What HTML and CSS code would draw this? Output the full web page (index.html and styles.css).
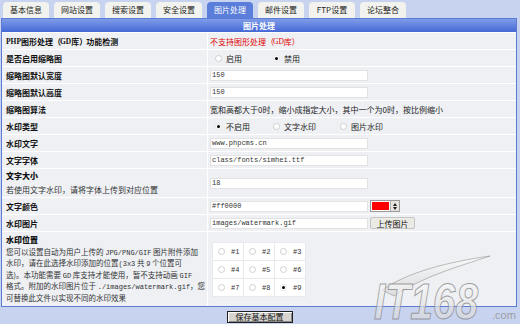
FILE: index.html
```html
<!DOCTYPE html>
<html lang="zh-CN">
<head>
<meta charset="utf-8">
<title>图片处理</title>
<link rel="stylesheet" href="styles.css">
</head>
<body>
<div class="tabs">
  <div class="tab">基本信息</div>
  <div class="tab">网站设置</div>
  <div class="tab">搜索设置</div>
  <div class="tab">安全设置</div>
  <div class="tab active">图片处理</div>
  <div class="tab">邮件设置</div>
  <div class="tab">FTP设置</div>
  <div class="tab">论坛整合</div>
</div>
<div class="panel">
  <div class="head">图片处理</div>
  <div class="row">
    <div class="lbl"><span class="lat">PHP</span>图形处理<span class="par">（</span><span class="lat">GD</span>库<span class="par">）</span>功能检测</div>
    <div class="val red">不支持图形处理<span class="par">（</span><span class="lat">GD</span>库<span class="par">）</span></div>
  </div>
  <div class="row">
    <div class="lbl">是否启用缩略图</div>
    <div class="val opts">
      <span class="opt"><span class="rd"></span>启用</span>
      <span class="opt"><span class="rd on"></span>禁用</span>
    </div>
  </div>
  <div class="row">
    <div class="lbl">缩略图默认宽度</div>
    <div class="val"><span class="inp">150</span></div>
  </div>
  <div class="row">
    <div class="lbl">缩略图默认高度</div>
    <div class="val"><span class="inp">150</span></div>
  </div>
  <div class="row">
    <div class="lbl">缩略图算法</div>
    <div class="val">宽和高都大于0时，缩小成指定大小，其中一个为0时，按比例缩小</div>
  </div>
  <div class="row">
    <div class="lbl">水印类型</div>
    <div class="val opts">
      <span class="opt"><span class="rd on"></span>不启用</span>
      <span class="opt wide"><span class="rd"></span>文字水印</span>
      <span class="opt"><span class="rd"></span>图片水印</span>
    </div>
  </div>
  <div class="row">
    <div class="lbl">水印文字</div>
    <div class="val"><span class="inp">www.phpcms.cn</span></div>
  </div>
  <div class="row">
    <div class="lbl">文字字体</div>
    <div class="val"><span class="inp">class/fonts/simhei.ttf</span></div>
  </div>
  <div class="row tall">
    <div class="lbl stack"><b>文字大小</b><span class="note">若使用文字水印，请将字体上传到对应位置</span></div>
    <div class="val"><span class="inp">18</span></div>
  </div>
  <div class="row">
    <div class="lbl">文字颜色</div>
    <div class="val">
      <span class="inp">#ff0000</span>
      <span class="colorsel"><span class="swatch"></span><span class="spin"><i class="up"></i><i class="dn"></i></span></span>
    </div>
  </div>
  <div class="row">
    <div class="lbl">水印图片</div>
    <div class="val">
      <span class="inp">images/watermark.gif</span>
      <span class="btn">上传图片</span>
    </div>
  </div>
  <div class="row pos">
    <div class="lbl stack top">
      <b class="ln">水印位置</b>
      <span class="note ln">您可以设置自动为用户上传的 <span class="m">JPG/PNG/GIF</span> 图片附件添加</span>
      <span class="note ln">水印，请在此选择水印添加的位置<span class="m">(3x3</span> 共 <span class="m">9</span> 个位置可</span>
      <span class="note ln">选)。本功能需要 <span class="m">GD</span> 库支持才能使用，暂不支持动画 <span class="m">GIF</span></span>
      <span class="note ln">格式。附加的水印图片位于 <span class="m">./images/watermark.gif</span>，您</span>
      <span class="note ln">可替换此文件以实现不同的水印效果</span>
    </div>
    <div class="val grid-cell">
      <table class="grid">
        <tr><td><span class="rd"></span>#1</td><td><span class="rd"></span>#2</td><td><span class="rd"></span>#3</td></tr>
        <tr><td><span class="rd"></span>#4</td><td><span class="rd"></span>#5</td><td><span class="rd"></span>#6</td></tr>
        <tr><td><span class="rd"></span>#7</td><td><span class="rd"></span>#8</td><td><span class="rd on"></span>#9</td></tr>
      </table>
    </div>
  </div>
</div>
<div class="actions"><button class="save">保存基本配置</button></div>
<svg class="wm" width="150" height="76" viewBox="0 0 150 76">
  <defs>
    <linearGradient id="g" x1="0" y1="0" x2="0" y2="1">
      <stop offset="0" stop-color="#ffffff" stop-opacity="0.75"/>
      <stop offset="1" stop-color="#d0d0d0" stop-opacity="0.6"/>
    </linearGradient>
  </defs>
  <path d="M14 42 C 40 24, 80 14, 122 8 C 92 18, 56 28, 26 48 Z" fill="url(#g)" stroke="rgba(140,140,140,0.7)" stroke-width="0.8"/>
  <text x="6" y="71" font-family="Liberation Sans" font-weight="bold" font-style="italic" font-size="50" textLength="104" lengthAdjust="spacingAndGlyphs" fill="url(#g)" stroke="rgba(120,120,120,0.7)" stroke-width="1">IT168</text>
  <text x="124" y="71" font-family="Liberation Sans" font-size="11" fill="rgba(150,150,150,0.9)">.com</text>
</svg>
</body>
</html>
```
FILE: styles.css
```css
html, body {
  margin: 0;
  padding: 0;
}
body {
  width: 520px;
  height: 324px;
  overflow: hidden;
  position: relative;
  background: #c8d3f0;
  font-family: "Noto Sans CJK SC", sans-serif;
  font-size: 8px;
  color: #222;
}
.tabs {
  display: flex;
  gap: 5px;
  padding: 2px 0 0 3px;
  height: 16px;
}
.tab {
  width: 46px;
  height: 16px;
  line-height: 16px;
  text-align: center;
  background: #f2f2ee;
  border-radius: 4px 4px 0 0;
  color: #222;
}
.tab.active {
  background: #5a7ed9;
  color: #fff;
}
.panel {
  width: 514px;
  margin-left: 1px;
  border: 1px solid #5b7bd5;
  background: #eef0f3;
}
.head {
  height: 13px;
  line-height: 13px;
  text-align: center;
  color: #fff;
  font-weight: bold;
  background: linear-gradient(#7f9ce8, #4469d4);
}
.row {
  display: grid;
  grid-template-columns: 206px 1fr;
  height: 17px;
  box-sizing: border-box;
  border-top: 1px solid #fff;
}
.row.tall { height: 29px; }
.row.pos { height: 75px; }
.lbl {
  display: flex;
  align-items: center;
  padding-left: 4px;
  border-right: 1px solid #fff;
  font-weight: bold;
  color: #111;
  white-space: nowrap;
}
.lat {
  font-family: "Liberation Serif", serif;
  font-size: 7.5px;
}
.par {
  display: inline-block;
  width: 7px;
  text-align: center;
}
.lbl.stack {
  flex-direction: column;
  align-items: flex-start;
  justify-content: center;
  line-height: 14px;
}
.lbl.stack.top {
  justify-content: flex-start;
  padding-top: 2px;
}
.ln {
  display: block;
  height: 11.5px;
  line-height: 11.5px;
}
.note {
  font-weight: normal;
  color: #333;
}
.top .note { font-size: 7.5px; }
.m {
  font-family: "Liberation Mono", monospace;
  font-size: 7px;
  line-height: 1;
}
.val {
  display: flex;
  align-items: center;
  gap: 2px;
  padding-left: 2px;
  white-space: nowrap;
  color: #222;
}
.val.red { color: #e00000; gap: 0; }
.val.opts {
  gap: 0;
  padding-left: 7px;
}
.val.grid-cell {
  align-items: flex-start;
  padding-left: 4px;
  padding-top: 10px;
}
.opt {
  display: flex;
  align-items: center;
  gap: 4px;
  width: 58px;
}
.opt.wide { width: 67px; }
.rd {
  display: inline-block;
  position: relative;
  width: 7px;
  height: 7px;
  box-sizing: border-box;
  border-radius: 50%;
  border: 1px solid #cfcfcf;
  background: #fff;
  flex: none;
}
.rd.on { border-color: #e6e6e6; }
.rd.on::after {
  content: "";
  position: absolute;
  left: 1px;
  top: 1px;
  width: 3px;
  height: 3px;
  border-radius: 50%;
  background: #000;
}
.inp {
  display: block;
  width: 158px;
  height: 11px;
  box-sizing: border-box;
  background: #fff;
  border: 1px solid #e2e2e2;
  padding-left: 1px;
  font-family: "Liberation Mono", "Noto Sans CJK SC", monospace;
  font-size: 7px;
  line-height: 9px;
  color: #333;
}
.colorsel {
  display: flex;
  width: 30px;
  height: 12px;
  box-sizing: border-box;
  border: 1px solid #9a9a9a;
  background: #fff;
}
.swatch {
  flex: 1;
  margin: 1px;
  background: #f00;
}
.spin {
  width: 8px;
  background: #e6e4df;
  border-left: 1px solid #b0b0b0;
  display: flex;
  flex-direction: column;
  align-items: center;
  justify-content: center;
  gap: 1px;
}
.spin i {
  display: block;
  width: 0;
  height: 0;
  border-left: 2px solid transparent;
  border-right: 2px solid transparent;
}
.spin .up { border-bottom: 3px solid #222; }
.spin .dn { border-top: 3px solid #222; }
.btn {
  display: block;
  width: 45px;
  height: 12px;
  line-height: 12px;
  box-sizing: border-box;
  text-align: center;
  background: #eceae4;
  border: 1px solid #c4c4c4;
  border-radius: 2px;
  color: #111;
}
.grid {
  border-collapse: collapse;
  background: #fff;
}
.grid td {
  width: 31px;
  height: 18px;
  box-sizing: border-box;
  padding: 0 0 0 5px;
  border: 1px solid #e8e9ec;
  font-family: "Liberation Mono", monospace;
  font-size: 7px;
  color: #333;
}
.grid td .rd {
  vertical-align: middle;
  margin-right: 6px;
}
.actions {
  display: flex;
  justify-content: center;
  padding-top: 4px;
  padding-right: 1px;
}
.save {
  width: 66px;
  height: 12px;
  padding: 0;
  font-family: "Noto Sans CJK SC", sans-serif;
  font-size: 8px;
  line-height: 10px;
  color: #111;
  background: #d8d5d0;
  border: 1px solid #222;
  box-shadow: inset 1px 1px #fff, inset -1px -1px #888;
}
.wm {
  position: absolute;
  left: 368px;
  top: 248px;
}
```
